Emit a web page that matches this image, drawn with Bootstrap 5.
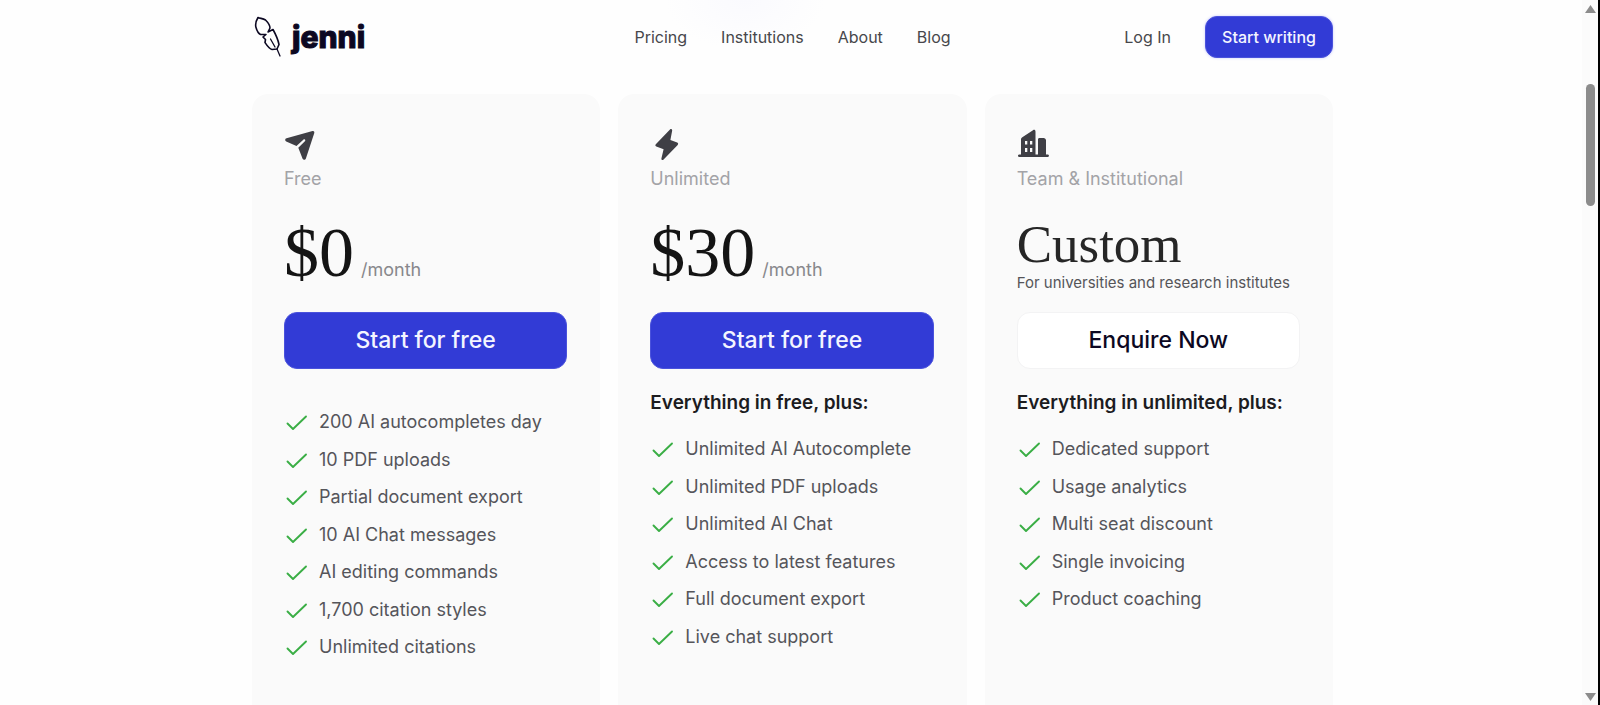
<!DOCTYPE html>
<html lang="en">
<head>
<meta charset="utf-8">
<meta name="viewport" content="width=device-width, initial-scale=1">
<title>Jenni – Pricing</title>
<link href="https://cdn.jsdelivr.net/npm/bootstrap@5.3.0/dist/css/bootstrap.min.css" rel="stylesheet">
<style>
  body { font-family: Inter, "Liberation Sans", sans-serif; color: #47474b; background: #fefefe; }
  .page-shell { padding-right: 15px; }
  .wrap { width: 100%; max-width: 1081px; margin: 0 auto; }
  .site-header { padding: 16px 0 36px; background: radial-gradient(ellipse 80px 50px at 47% 0, #fafafe, #fefefe); }
  .site-header a { font-size: 16px; color: #47474b; text-decoration: none; }
  .site-header a.brand { font-size: 30px; line-height: 40px; font-weight: 800; color: #0c0822; -webkit-text-stroke: 1px #0c0822; }
  .menu { gap: 34px; }
  .btn-brand { --bs-btn-bg: #323bd6; --bs-btn-color: #f4f5ff; --bs-btn-border-color: #4a52dc; --bs-btn-hover-bg: #2830bb; --bs-btn-hover-color: #fff; }
  .btn-top { height: 42px; width: 128px; padding: 0; border-radius: 12px; font-size: 16px; font-weight: 500; box-shadow: 0 0 3px #c9cbff; }
  .plans { gap: 18px; }
  .plan { flex: 1 1 0; min-width: 0; padding: 32px 33px 32px 32px; background: #fafafa; border-radius: 16px 16px 0 0; }
  .plan-icon { width: 36px; height: 36px; color: #3f3f45; display: block; }
  .plan-name { font-size: 18px; line-height: 26px; font-weight: 400; color: #a3a3a7; margin: 4px 0 26px; }
  .price-box { height: 94px; }
  .amount { font-family: "Liberation Serif", serif; font-size: 70px; line-height: 70px; color: #141414; }
  .amount-word { font-family: "Liberation Serif", serif; font-size: 53px; line-height: 53px; color: #262626; }
  .period { font-size: 18px; color: #88888c; margin-left: 7px; }
  .price-note { font-size: 15px; line-height: 22px; margin: 1px 0 0; white-space: nowrap; color: #555559; }
  .btn-plan { height: 57px; padding: 0; border-radius: 13px; font-size: 23px; font-weight: 500; }
  .btn-plain { --bs-btn-bg: #fff; --bs-btn-color: #0c0822; --bs-btn-border-color: #f3f3f4; --bs-btn-hover-bg: #f6f6f8; --bs-btn-hover-color: #0c0822; }
  .plus { font-size: 19px; line-height: 26px; font-weight: 600; color: #1c1c1f; margin: 21px 0 22px; white-space: nowrap; }
  .features { font-size: 18px; line-height: 1.25; gap: 15px; color: #55555a; }
  .features-first { margin-top: 42px; }
  .features svg { width: 24px; height: 24px; flex: none; margin: -2px 11px 0 0; }
  .scroll-track { position: fixed; top: 0; right: 0; bottom: 0; width: 18px; padding: 5px 0 4px; background: #fbfbfb; border-right: 2px solid #000; }
  .scroll-thumb { width: 9px; height: 122px; margin-top: 71px; border-radius: 5px; background: #8c8c8c; }
</style>
</head>
<body>
<svg class="d-none" aria-hidden="true">
  <symbol id="tick" viewBox="0 0 24 24"><path d="M3.500 14.500 9 20 22 7.500" fill="none" stroke="#3aae45" stroke-width="1.900" stroke-linecap="round" stroke-linejoin="round"/></symbol>
</svg>
<div class="page-shell min-vh-100 d-flex flex-column">
  <header class="site-header">
    <div class="wrap d-flex align-items-center">
      <div class="col d-flex">
        <a href="#" class="brand d-flex align-items-center">
          <svg width="32" height="42" viewBox="0 0 32 42" fill="none" stroke="#0c0822" stroke-width="1.600" stroke-linejoin="round" stroke-linecap="round" class="me-2" aria-hidden="true">
            <path d="M6 1.500C4.500 4 3 8 4 11.500C5 15 6.500 17.500 8.500 18.500L14 18.500 11 21 13.500 23.500 13 26.500C15 29.500 17 33 20 33.500L25 33 27 28.500C26 23.500 23.500 18 21 13.500L16 16 18 12C18 8.500 15.500 6 13.500 4C11 2.500 8.500 2.500 6 1.500Z"/>
            <path d="M18.500 23 23 31M25 33 28 40" stroke-width="1.300"/>
          </svg>jenni</a>
      </div>
      <nav class="menu d-flex" aria-label="Main">
        <a href="#">Pricing</a><a href="#">Institutions</a><a href="#">About</a><a href="#">Blog</a>
      </nav>
      <div class="col menu d-flex justify-content-end align-items-center">
        <a href="#">Log In</a>
        <button type="button" class="btn btn-brand btn-top">Start writing</button>
      </div>
    </div>
  </header>

  <main class="plans wrap d-flex flex-grow-1">
    <section class="plan">
      <svg class="plan-icon" viewBox="0 0 36 36" fill="currentColor" aria-hidden="true"><path d="M28.500 5 2.500 12.300C.8 12.800.8 14.700 2.200 15.500L12.500 20 19.300 13.700C20.700 12.500 22.100 14 20.900 15.200L14.300 21.800 18.600 32.700C19.300 34.200 21.400 34 21.900 32.500L30.300 7C30.600 5.600 29.800 4.700 28.500 5Z"/></svg>
      <h2 class="plan-name">Free</h2>
      <div class="price-box d-flex align-items-baseline"><span class="amount">$0</span><span class="period">/month</span></div>
      <button type="button" class="btn btn-brand btn-plan w-100">Start for free</button>
      <ul class="features features-first list-unstyled d-flex flex-column">
        <li class="d-flex"><svg><use href="#tick"/></svg>200 AI autocompletes day</li>
        <li class="d-flex"><svg><use href="#tick"/></svg>10 PDF uploads</li>
        <li class="d-flex"><svg><use href="#tick"/></svg>Partial document export</li>
        <li class="d-flex"><svg><use href="#tick"/></svg>10 AI Chat messages</li>
        <li class="d-flex"><svg><use href="#tick"/></svg>AI editing commands</li>
        <li class="d-flex"><svg><use href="#tick"/></svg>1,700 citation styles</li>
        <li class="d-flex"><svg><use href="#tick"/></svg>Unlimited citations</li>
      </ul>
    </section>

    <section class="plan">
      <svg class="plan-icon" viewBox="0 0 36 36" fill="currentColor" aria-hidden="true"><path d="M20 3.400 5.800 18.200C5 19.100 5.300 20 6.300 20.400L13.600 23.200 11.400 32.400C11.300 34 12.600 34.500 13.600 33.500L27.700 18.900C28.500 18 28.200 17 27.200 16.600L20.400 14.100 22.200 4.600C22.200 3.100 21 2.500 20 3.400Z"/></svg>
      <h2 class="plan-name">Unlimited</h2>
      <div class="price-box d-flex align-items-baseline"><span class="amount">$30</span><span class="period">/month</span></div>
      <button type="button" class="btn btn-brand btn-plan w-100">Start for free</button>
      <h3 class="plus">Everything in free, plus:</h3>
      <ul class="features list-unstyled d-flex flex-column">
        <li class="d-flex"><svg><use href="#tick"/></svg>Unlimited AI Autocomplete</li>
        <li class="d-flex"><svg><use href="#tick"/></svg>Unlimited PDF uploads</li>
        <li class="d-flex"><svg><use href="#tick"/></svg>Unlimited AI Chat</li>
        <li class="d-flex"><svg><use href="#tick"/></svg>Access to latest features</li>
        <li class="d-flex"><svg><use href="#tick"/></svg>Full document export</li>
        <li class="d-flex"><svg><use href="#tick"/></svg>Live chat support</li>
      </ul>
    </section>

    <section class="plan">
      <svg class="plan-icon" viewBox="0 0 36 36" fill="currentColor" fill-rule="evenodd" aria-hidden="true"><path d="M4 28.500V13.500C4 12.500 4.500 11.700 5.300 11.200L16 4.200C17.300 3.400 18.500 4 18.500 5.700V28.500H21V13.500C21 12.600 21.500 12 22.500 12H26.500C28 12 29 13 29 14.500V28.500H31C32.300 28.500 32.300 31 31 31H2C.6 31 .6 28.500 2 28.500ZM8 15V18.500H10.300V15ZM13 15V18.500H15.300V15ZM8 22V26H10.300V22ZM13 22V26H15.300V22Z"/></svg>
      <h2 class="plan-name">Team &amp; Institutional</h2>
      <div class="price-box"><div class="amount-word">Custom</div><p class="price-note">For universities and research institutes</p></div>
      <button type="button" class="btn btn-plain btn-plan w-100">Enquire Now</button>
      <h3 class="plus">Everything in unlimited, plus:</h3>
      <ul class="features list-unstyled d-flex flex-column">
        <li class="d-flex"><svg><use href="#tick"/></svg>Dedicated support</li>
        <li class="d-flex"><svg><use href="#tick"/></svg>Usage analytics</li>
        <li class="d-flex"><svg><use href="#tick"/></svg>Multi seat discount</li>
        <li class="d-flex"><svg><use href="#tick"/></svg>Single invoicing</li>
        <li class="d-flex"><svg><use href="#tick"/></svg>Product coaching</li>
      </ul>
    </section>
  </main>
</div>
<div class="scroll-track d-flex flex-column align-items-center" aria-hidden="true">
  <svg width="11" height="8" viewBox="0 0 11 8"><path d="M5.500 0 11 8H0Z" fill="#8c8c8c"/></svg>
  <div class="scroll-thumb"></div>
  <svg class="mt-auto" width="11" height="8" viewBox="0 0 11 8"><path d="M0 0H11L5.500 8Z" fill="#8c8c8c"/></svg>
</div>
<script src="https://cdn.jsdelivr.net/npm/bootstrap@5.3.0/dist/js/bootstrap.bundle.min.js"></script>
</body>
</html>
